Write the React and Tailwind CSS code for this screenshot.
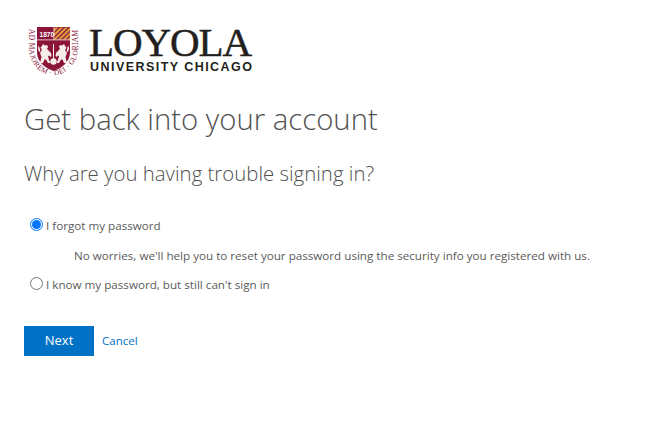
const sans = { fontFamily: '"Open Sans", "Noto Sans", sans-serif' };

function Lion({ flip }) {
  return (
    <g transform={flip ? "translate(53 0) scale(-1 1)" : undefined} fill="#f7eeea">
      <path d="M13 38 L14.5 32 L13 28 L15 25 L13.5 22.5 L15 21 L16 19 L18 20.5 L20 20 L21 22 L20 24 L22 26 L24 28 L24.5 31 L23 32 L22.5 30.5 L21 31 L22 35 L23.5 38 L21 38 L19 34.5 L17.5 34.5 L16 38 Z" />
      <path d="M12 27 L10.8 23 L11.8 20.5 L12.6 23 L13.5 26 Z" />
    </g>
  );
}

function Seal() {
  return (
    <svg width="52" height="52" viewBox="0 0 52 52" className="shrink-0">
      <defs>
        <path id="arc" d="M2 4 L2 23 C2 39 14 50 26.5 50 C39 50 51 39 51 23 L51 4" fill="none" />
        <pattern id="st" width="3.4" height="3.4" patternUnits="userSpaceOnUse" patternTransform="rotate(-45)">
          <rect width="3.4" height="3.4" fill="#e2a43a" />
          <rect width="3.4" height="1.5" fill="#96213f" />
        </pattern>
      </defs>
      <path d="M10 2 H43 V27 C43 37 35 43 26.5 46 C18 43 10 37 10 27 Z" fill="#8a1538" />
      <rect x="27" y="2.5" width="16" height="12" fill="url(#st)" />
      <rect x="10" y="14.5" width="33" height="0.8" fill="#f7eeea" />
      <rect x="26.5" y="2" width="0.8" height="13" fill="#f7eeea" />
      <text x="12.5" y="12" fontSize="6.6" fontWeight="700" fill="#fff" fontFamily="Liberation Sans">1870</text>
      <Lion />
      <Lion flip />
      <rect x="26" y="19" width="1" height="16" fill="#f7eeea" />
      <circle cx="26.5" cy="36.5" r="3.2" fill="#f7eeea" />
      <text fontSize="7.4" fill="#8a1538" fontFamily="Liberation Serif">
        <textPath href="#arc" textLength="118" lengthAdjust="spacing">AD MAJOREM · DEI · GLORIAM</textPath>
      </text>
    </svg>
  );
}

function Logo() {
  return (
    <div className="flex items-center h-[52px] gap-[11px] ml-[3px]">
      <Seal />
      <div className="flex flex-col text-[#231f20] -mt-[2px] -ml-[1px]">
        <span className="text-[41px] leading-[32px] tracking-[-1.1px] [-webkit-text-stroke:0.5px_#231f20]" style={{ fontFamily: '"Liberation Serif", serif' }}>LOYOLA</span>
        <span className="text-[12.5px] leading-[13px] font-bold tracking-[1.45px] mt-[3px] ml-[1px]" style={{ fontFamily: '"Liberation Sans", sans-serif' }}>UNIVERSITY CHICAGO</span>
      </div>
    </div>
  );
}

function Radio({ checked }) {
  return (
    <span className={`w-[13px] h-[13px] rounded-full shrink-0 flex items-center justify-center border ${checked ? "border-[#0075ff]" : "border-[#767676]"} bg-white`}>
      {checked && <span className="w-[9px] h-[9px] rounded-full bg-[#0075ff]" />}
    </span>
  );
}

export default function App() {
  return (
    <div className="w-[652px] h-[426px] bg-white overflow-hidden px-[24px] pt-[25px] text-[#5a5a5a]" style={sans}>
      <Logo />
      <h1 className="mt-[22px] text-[29.3px] leading-[40px] font-light text-[#505050]">Get back into your account</h1>
      <h2 className="mt-[20px] text-[20.4px] leading-[28px] font-light text-[#505050]">Why are you having trouble signing in?</h2>
      <div className="mt-[31px] ml-[6px] flex items-start h-[16px] gap-[3px] text-[11.65px] leading-[16px]">
        <Radio checked />
        <span>I forgot my password</span>
      </div>
      <p className="mt-[14px] ml-[50px] text-[11.65px] leading-[16px] whitespace-nowrap">No worries, we'll help you to reset your password using the security info you registered with us.</p>
      <div className="mt-[13px] ml-[6px] flex items-start h-[16px] gap-[3px] text-[11.65px] leading-[16px]">
        <Radio />
        <span>I know my password, but still can't sign in</span>
      </div>
      <div className="mt-[33px] flex items-center gap-[8px]">
        <button className="w-[70px] h-[30px] bg-[#0072c6] text-white text-[13px] font-medium">Next</button>
        <a className="text-[11.5px] text-[#0072c6]">Cancel</a>
      </div>
    </div>
  );
}
